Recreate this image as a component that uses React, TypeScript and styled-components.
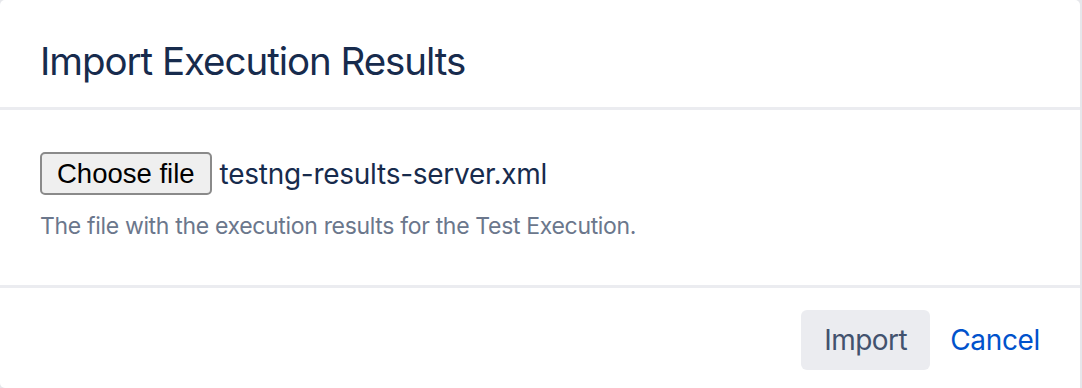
import React from "react";
import styled, { createGlobalStyle } from "styled-components";

const Global = createGlobalStyle`
  html, body {
    margin: 0;
    padding: 0;
    background: #e6e7eb;
  }
  body {
    font-family: Inter, "Noto Sans", sans-serif;
    width: 1082px;
    height: 388px;
    overflow: hidden;
  }
`;

const Dialog = styled.div`
  width: 1080px;
  height: 388px;
  background: #ffffff;
  border-radius: 5px 5px 0 5px;
  display: flex;
  flex-direction: column;
  overflow: hidden;
`;

const Header = styled.header`
  box-sizing: border-box;
  height: 110px;
  padding: 38px 40px 0;
  border-bottom: 3px solid #ebecf0;
`;

const Title = styled.h1`
  margin: 0;
  font-family: Inter, sans-serif;
  font-weight: 400;
  font-size: 38.5px;
  line-height: 46px;
  letter-spacing: -1.05px;
  color: #172b4d;
`;

const Body = styled.section`
  box-sizing: border-box;
  height: 178px;
  padding: 42px 40px 0;
  border-bottom: 3px solid #ebecf0;
`;

const FileRow = styled.div`
  display: flex;
  align-items: center;
  gap: 8px;
`;

const ChooseButton = styled.button`
  box-sizing: border-box;
  height: 43px;
  padding: 0 15px;
  background: #efefef;
  border: 2px solid #8a8a8a;
  border-radius: 5px;
  font-family: "Liberation Sans", Arial, sans-serif;
  font-size: 27.5px;
  color: #000000;
  cursor: pointer;
`;

const FileName = styled.span`
  font-family: Inter, sans-serif;
  font-size: 28px;
  line-height: 34px;
  letter-spacing: -0.27px;
  color: #172b4d;
`;

const Helper = styled.p`
  margin: 17px 0 0;
  font-family: Inter, sans-serif;
  font-size: 23px;
  line-height: 28px;
  letter-spacing: -0.33px;
  color: #6b778c;
`;

const Footer = styled.footer`
  flex: 1;
  display: flex;
  justify-content: flex-end;
  align-items: flex-start;
  padding: 22px 20px 0 0;
`;

const FooterButton = styled.button<{ $variant: "default" | "link" }>`
  height: 60px;
  padding: 0 ${(p) => (p.$variant === "link" ? "20px" : "23px")};
  border: none;
  border-radius: 6px;
  background: ${(p) => (p.$variant === "link" ? "transparent" : "#ebecf0")};
  color: ${(p) => (p.$variant === "link" ? "#0052cc" : "#42526e")};
  font-family: Inter, sans-serif;
  font-size: 28px;
  letter-spacing: ${(p) => (p.$variant === "link" ? "-0.35px" : "-0.5px")};
  cursor: pointer;
`;

export default function App() {
  return (
    <>
      <Global />
      <Dialog>
        <Header>
          <Title>Import Execution Results</Title>
        </Header>
        <Body>
          <FileRow>
            <ChooseButton type="button">Choose file</ChooseButton>
            <FileName>testng-results-server.xml</FileName>
          </FileRow>
          <Helper>The file with the execution results for the Test Execution.</Helper>
        </Body>
        <Footer>
          <FooterButton $variant="default" type="button">Import</FooterButton>
          <FooterButton $variant="link" type="button">Cancel</FooterButton>
        </Footer>
      </Dialog>
    </>
  );
}
